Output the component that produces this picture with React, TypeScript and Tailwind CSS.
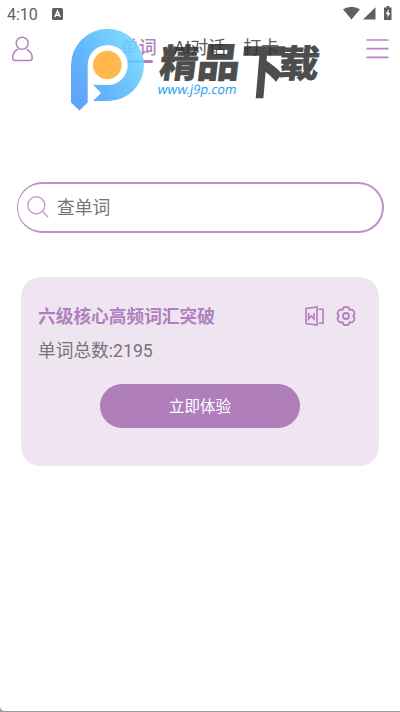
import { useState } from "react";

const tabs = ["单词", "AI对话", "打卡"];

const StatusBar: React.FC = () => {
  return (
    <div className="h-[27px] shrink-0 flex items-center justify-between pl-[7px] pr-[7px] text-[#5f5f5f]">
      <div className="flex items-center gap-[14px]">
        <span className="font-[Roboto] text-[16px] leading-none pt-[2px]">4:10</span>
        <svg width="11" height="12" viewBox="0 0 11 12">
          <rect width="11" height="12" rx="1.5" fill="#5f5f5f" />
          <path d="M2.8 9 5.5 3 8.2 9M3.8 7.2h3.4" fill="none" stroke="#fff" strokeWidth="1.5" />
        </svg>
      </div>
      <svg width="50" height="15" viewBox="0 0 50 15" fill="#5f5f5f">
        <path d="M0 3.3Q8.5-2 17 3.3L8.5 13.5z" />
        <path d="M32.5 1.2v12.3H20z" />
        <path d="M43.5 0h3v1.5h2V14h-7.500V1.5h2.500z" />
        <path d="M45.6 3.3 42.7 8h1.8v3.6L47.3 7h-1.700z" fill="#fff" />
      </svg>
    </div>
  );
};

const Header: React.FC = () => {
  const [active, setActive] = useState(0);
  return (
    <div className="h-[43px] shrink-0 flex items-start justify-between pl-[12px] pr-[11px] pt-[9px]">
      <svg width="22" height="26" viewBox="0 0 22 26" fill="none" stroke="#b583c2" strokeWidth="1.5">
        <circle cx="10.2" cy="7.3" r="6" />
        <path d="M6 13.3C2.3 15 .6 18.5.6 22Q.6 24.5 3 24.5H17.8Q20.2 24.5 20.2 22C20.2 18.5 18.3 15 14.6 13.3" />
      </svg>
      <div className="flex gap-[17px] pt-[2px] text-[18px] leading-[20px] text-[#5f5f5f]">
        {tabs.map((tab, i) => (
          <button
            key={tab}
            onClick={() => setActive(i)}
            className={i === active ? "flex flex-col items-center font-medium text-[#b07fbd]" : "flex flex-col items-center"}
          >
            <span>{tab}</span>
            {i === active && <span className="w-[29px] h-[3px] mt-[2px] rounded-full bg-[#b07fbd]" />}
          </button>
        ))}
      </div>
      <svg width="23" height="26" viewBox="0 0 23 26" stroke="#b583c2" strokeWidth="1.7">
        <path d="M.5 4h22M.5 12.7h22M.5 21.3h22" />
      </svg>
    </div>
  );
};

const Watermark: React.FC = () => {
  return (
    <svg
      className="absolute left-0 top-0 pointer-events-none"
      width="400"
      height="120"
      viewBox="0 0 400 120"
    >
      <defs>
        <linearGradient id="mark" x1="0" y1="1" x2="1" y2="0.3">
          <stop offset="0" stopColor="#4a90fa" />
          <stop offset="0.45" stopColor="#4cadfa" />
          <stop offset="1" stopColor="#70d8ff" />
        </linearGradient>
      </defs>
      <circle cx="107.5" cy="65" r="21" fill="#fff" />
      <path
        d="M79.5 110.5 71 102.5V65.5A36.5 36.5 0 0 1 144 65A36 36 0 0 1 108 101H93L101 93 93 84.7 107.7 85A20 20 0 1 0 87.7 65V102.500z"
        fill="url(#mark)"
        fillOpacity="0.88"
      />
      <circle cx="107.3" cy="65" r="14.3" fill="#ffb84d" />
      <g
        fill="#303032"
        stroke="#303032"
        strokeWidth="1.2"
        opacity="0.86"
        fontFamily="'Noto Sans CJK SC', sans-serif"
        fontWeight="700"
        fontSize="40"
      >
        <text transform="matrix(0.95 0 -0.12 0.95 158.5 77)">精</text>
        <text transform="matrix(1.07 0 -0.12 1 196 77)">品</text>
        <text transform="matrix(1.1 0 -0.12 1.43 239 92)" strokeWidth="1.8">下</text>
        <text transform="matrix(1 0 -0.12 0.93 277.5 76.5)">载</text>
      </g>
      <text
        transform="translate(157 93.5) skewX(-10)"
        fill="#27a5ee"
        fontFamily="'Noto Sans', sans-serif"
        fontSize="13"
        textLength="79"
        lengthAdjust="spacingAndGlyphs"
      >
        www.j9p.com
      </text>
    </svg>
  );
};

const SearchBox: React.FC = () => {
  return (
    <div className="h-[51px] shrink-0 mt-[112px] mx-[16.5px] rounded-full bg-[#bd90c8] px-[1.5px] pt-[1.5px] pb-[2px]">
      <div className="h-full flex items-center gap-[8px] pl-[9px] rounded-full bg-white">
        <svg width="22" height="22" viewBox="0 0 22 22" fill="none" stroke="#c79bd1" strokeWidth="1.4">
          <circle cx="9.3" cy="9.3" r="8.5" />
          <path d="m15.5 15.5 5.7 5.7" />
        </svg>
        <span className="text-[17.8px] text-[#757575] pt-[3px]">查单词</span>
      </div>
    </div>
  );
};

const WordCard: React.FC = () => {
  return (
    <div className="h-[189px] shrink-0 mt-[44px] mx-[21px] rounded-[20px] bg-[#efe5f1] pt-[26px] px-[17px] flex flex-col">
      <div className="h-[26px] flex items-center justify-between pr-[6px]">
        <span className="text-[17.7px] font-bold text-[#b07fbd] pt-[3px]">六级核心高频词汇突破</span>
        <div className="flex items-center gap-[12px]">
          <svg width="19" height="20" viewBox="0 0 19 20" fill="none" stroke="#b07fbd" strokeWidth="1.6">
            <path d="M1 2.5 12 1v18L1 17.500zM13.5 3.3H18v14h-4.5" />
            <path d="M3.7 7v6L6.3 10 9 13V7" />
          </svg>
          <svg width="20" height="20" viewBox="0 0 20 20" fill="none" stroke="#b07fbd" strokeWidth="1.8" strokeLinejoin="round">
            <path d="M17.2 10 18.64 12.15Q18.3 14.8 16.18 16.4L13.6 16.24 12.45 18.55Q10 19.6 7.55 18.55L6.4 16.24 3.82 16.4Q1.7 14.8 1.36 12.15L2.8 10 1.36 7.85Q1.7 5.2 3.82 3.6L6.4 3.76 7.55 1.45Q10 .4 12.45 1.45L13.6 3.76 16.18 3.6Q18.3 5.2 18.64 7.85z" />
            <circle cx="10" cy="10" r="3" />
          </svg>
        </div>
      </div>
      <div className="mt-[8px] leading-[26px] text-[17.7px] text-[#757575] pt-[1px]">单词总数:2195</div>
      <button className="w-[200px] h-[44px] mt-[20px] mx-auto pt-[3px] rounded-full bg-[#b07ebb] text-[15.5px] text-white">
        立即体验
      </button>
    </div>
  );
};

export default function App() {
  return (
    <div className="bg-[#999]">
      <div className="relative w-[400px] h-[712px] overflow-hidden flex flex-col bg-white border-b border-[#999] rounded-bl-[5px] font-[Roboto,'Noto_Sans_CJK_SC',sans-serif]">
        <StatusBar />
        <Header />
        <SearchBox />
        <WordCard />
        <Watermark />
      </div>
    </div>
  );
}
